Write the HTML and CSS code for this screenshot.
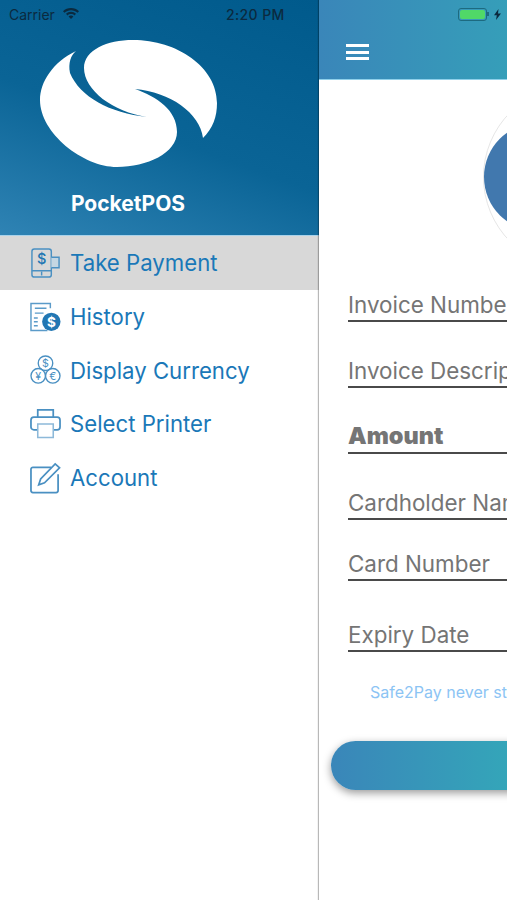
FILE: index.html
```html
<!DOCTYPE html>
<html lang="en">
<head>
  <meta charset="UTF-8">
  <meta name="viewport" content="width=device-width, initial-scale=1">
  <title>PocketPOS</title>
  <link rel="stylesheet" href="styles.css">
</head>
<body>
  <div class="app">

    <aside class="drawer">
      <div class="drawer-head">
        <div class="status">
          <span class="carrier">Carrier</span>
          <svg class="wifi" viewBox="0 0 16 11" width="16" height="11"><path d="M8 0C5 0 2.200 1.200 0 3.200l1.500 1.600C3.300 3.200 5.500 2.200 8 2.200s4.700 1 6.500 2.600L16 3.200C13.800 1.200 11 0 8 0z"/><path d="M8 3.800c-2 0-3.700.8-5 2l1.500 1.600c.9-.9 2.100-1.400 3.500-1.400s2.600.5 3.500 1.400L13 5.800c-1.300-1.200-3-2-5-2z"/><path d="M8 7.500c-1 0-1.800.4-2.400 1L8 11l2.400-2.500C9.800 7.900 9 7.500 8 7.500z"/></svg>
          <span class="clock">2:20 PM</span>
        </div>
        <svg class="logo" viewBox="40 40 178 128" width="178" height="128">
          <path fill="#fff" d="M76 51C53 62 40 82 40 100C40 133 83 167 117 167C147 167 177 153 177 132C177 110 157 97 135 89C170 92 200 113 203 138C213 128 217 117 217 103C217 67 177 40 133 40C107 40 84 50 84 68C84 90 113 112 147 117C110 113 80 97 70 73C68 63 71 55 76 51Z"/>
        </svg>
        <div class="brand">PocketPOS</div>
      </div>

      <nav class="menu">
        <a class="menu-item active">
          <svg class="menu-icon" viewBox="0 0 32 32"><g fill="none" stroke="#4a90c2" stroke-width="1.500"><rect x="2" y="1.500" width="20" height="29" rx="2.500"/><path d="M2 24h20M12 25v4"/><path d="M22 10h8v11h-8" fill="#c4d6e2"/></g><text x="12" y="17" class="icon-dollar">$</text></svg>
          <span>Take Payment</span>
        </a>
        <a class="menu-item">
          <svg class="menu-icon" viewBox="0 0 32 32"><g fill="none" stroke="#5b9bc9" stroke-width="1.500"><path d="M21 7V2H1v28h17"/><path d="M5 7h12M5 12h9M4 17h4M4 21h4M4 25h4"/></g><circle cx="22" cy="21" r="9.500" fill="#2277b3"/><text x="22" y="26" class="icon-dollar light">$</text></svg>
          <span>History</span>
        </a>
        <a class="menu-item">
          <svg class="menu-icon" viewBox="0 0 32 32"><g fill="none" stroke="#4a90c2" stroke-width="1.400"><circle cx="16" cy="9" r="7.500"/><circle cx="8.500" cy="22" r="7.500"/><circle cx="23.500" cy="22" r="7.500"/></g><text x="16" y="13" class="icon-coin">$</text><text x="8.500" y="26" class="icon-coin">¥</text><text x="23.500" y="26" class="icon-coin">€</text></svg>
          <span>Display Currency</span>
        </a>
        <a class="menu-item">
          <svg class="menu-icon" viewBox="0 0 32 32"><g fill="none" stroke="#4a90c2" stroke-width="1.800"><path d="M8 9V1.500h16V9"/><path d="M8 22H4a3 3 0 0 1-3-3v-7a3 3 0 0 1 3-3h24a3 3 0 0 1 3 3v7a3 3 0 0 1-3 3h-4"/></g><path d="M8 16h16v14H8z" fill="#fff" stroke="#8db9d9" stroke-width="1.600"/></svg>
          <span>Select Printer</span>
        </a>
        <a class="menu-item">
          <svg class="menu-icon" viewBox="0 0 32 32"><g fill="none" stroke="#4a90c2" stroke-width="1.800"><path d="M22 5H3a2 2 0 0 0-2 2v22a2 2 0 0 0 2 2h24a2 2 0 0 0 2-2V12"/><path d="M9 23l2-6L26 1.500l4.500 4L15 21z"/></g></svg>
          <span>Account</span>
        </a>
      </nav>
    </aside>

    <main class="screen">
      <header class="topbar">
        <div class="battery-row">
          <span class="battery"><span class="battery-fill"></span></span>
          <span class="battery-tip"></span>
          <svg class="bolt" viewBox="0 0 7 11" width="7" height="11"><path d="M4.500 0L0 6.300h2.800L2 11l5-6.600H4z"/></svg>
        </div>
        <div class="burger"><span></span><span></span><span></span></div>
      </header>

      <div class="avatar-wrap">
        <div class="avatar-ring"><div class="avatar"></div></div>
      </div>

      <form class="fields">
        <div class="field first">Invoice Number</div>
        <div class="field">Invoice Description</div>
        <div class="field amount">Amount</div>
        <div class="field">Cardholder Name</div>
        <div class="field short">Card Number</div>
        <div class="field tall">Expiry Date</div>
      </form>
      <p class="note">Safe2Pay never stores your card details</p>
      <div class="pay-btn"></div>
    </main>
  </div>
</body>
</html>
```

FILE: styles.css
```css
* {
  margin: 0;
  padding: 0;
  box-sizing: border-box;
}

body {
  font-family: Inter, "Liberation Sans", sans-serif;
  background: #fff;
  overflow: hidden;
  height: 900px;
}

.app {
  display: flex;
  width: 507px;
  height: 900px;
  overflow: hidden;
}

/* Drawer */
.drawer {
  width: 319px;
  flex-shrink: 0;
  background: #fff;
}

.drawer-head {
  height: 236px;
  padding-top: 5px;
  background: linear-gradient(200deg, #005a8c 0%, #0a6496 55%, #2f83b4 100%);
  border-bottom: 1px solid #a9d2ea;
}

.status {
  display: flex;
  align-items: center;
  height: 18px;
  padding-left: 9px;
  color: #0b2a3f;
  font-size: 14px;
}

.carrier {
  margin-right: 8px;
}

.wifi {
  fill: #0b2a3f;
  margin-top: -2px;
}

.clock {
  margin-left: 147px;
  font-weight: 500;
  letter-spacing: 0.4px;
}

.logo {
  display: block;
  margin: 17px 0 0 40px;
}

.brand {
  margin-top: 23px;
  padding-right: 63px;
  text-align: center;
  color: #fff;
  font-size: 21px;
  font-weight: 700;
}

.menu-item {
  display: flex;
  align-items: center;
  height: 53.7px;
  padding-left: 30px;
  color: #1a78b8;
  font-size: 22.2px;
}

.menu-item.active {
  background: #d8d8d8;
}

.menu-icon {
  width: 31px;
  height: 32px;
  margin-right: 9px;
  flex-shrink: 0;
}

.icon-dollar {
  font-size: 15px;
  font-weight: 500;
  fill: #2277b3;
  text-anchor: middle;
}

.icon-dollar.light {
  fill: #fff;
  font-size: 14px;
  font-weight: 700;
}

.icon-coin {
  font-size: 11px;
  fill: #4a90c2;
  text-anchor: middle;
}

/* Main screen, runs off the right edge */
.screen {
  width: 414px;
  flex-shrink: 0;
  background: #fff;
  box-shadow: -1px 0 1px rgba(0, 0, 0, 0.28);
}

.topbar {
  height: 80px;
  background: linear-gradient(90deg, #3a86b9, #34a6b9 60%);
  border-bottom: 1px solid #8fd0ea;
  padding: 5px 0 0 27px;
}

.battery-row {
  display: flex;
  align-items: center;
  height: 18px;
  padding-left: 112px;
}

.battery {
  display: block;
  width: 29px;
  height: 13px;
  padding: 1px;
  border: 1px solid #1d6a80;
  border-radius: 3px;
}

.battery-fill {
  display: block;
  height: 100%;
  background: #50d868;
  border-radius: 2px;
}

.battery-tip {
  width: 2px;
  height: 4px;
  margin-right: 5px;
  background: #1d6a80;
}

.bolt {
  fill: #0b2a3f;
}

.burger {
  display: flex;
  flex-direction: column;
  gap: 3.5px;
  width: 23px;
  margin-top: 21px;
}

.burger span {
  display: block;
  height: 3px;
  background: #fff;
}

.avatar-wrap {
  height: 192px;
  padding: 5px 0 0 164px;
}

.avatar-ring {
  display: flex;
  align-items: center;
  width: 184px;
  height: 184px;
  border: 1px solid #e6e6e6;
  border-radius: 50%;
}

.avatar {
  width: 108px;
  height: 108px;
  background: #4178ae;
  border-radius: 50%;
}

.fields {
  margin-left: 29px;
}

.field {
  display: flex;
  align-items: flex-end;
  height: 66px;
  padding-bottom: 2px;
  color: #757575;
  font-size: 22.4px;
  white-space: nowrap;
  border-bottom: 2px solid #4a4a4a;
}

.field.first {
  height: 50px;
}

.field.amount {
  font-size: 23.5px;
  font-weight: 900;
}

.field.short {
  height: 61px;
}

.field.tall {
  height: 71px;
}

.note {
  margin: 30px 0 0 51px;
  color: #8cc4f4;
  font-size: 16px;
  white-space: nowrap;
}

.pay-btn {
  width: 360px;
  height: 49px;
  margin: 39px 0 0 12px;
  border-radius: 25px;
  background: linear-gradient(90deg, #3a86b9, #34a6b9 50%);
  box-shadow: 0 3px 8px rgba(0, 0, 0, 0.4);
}
```
